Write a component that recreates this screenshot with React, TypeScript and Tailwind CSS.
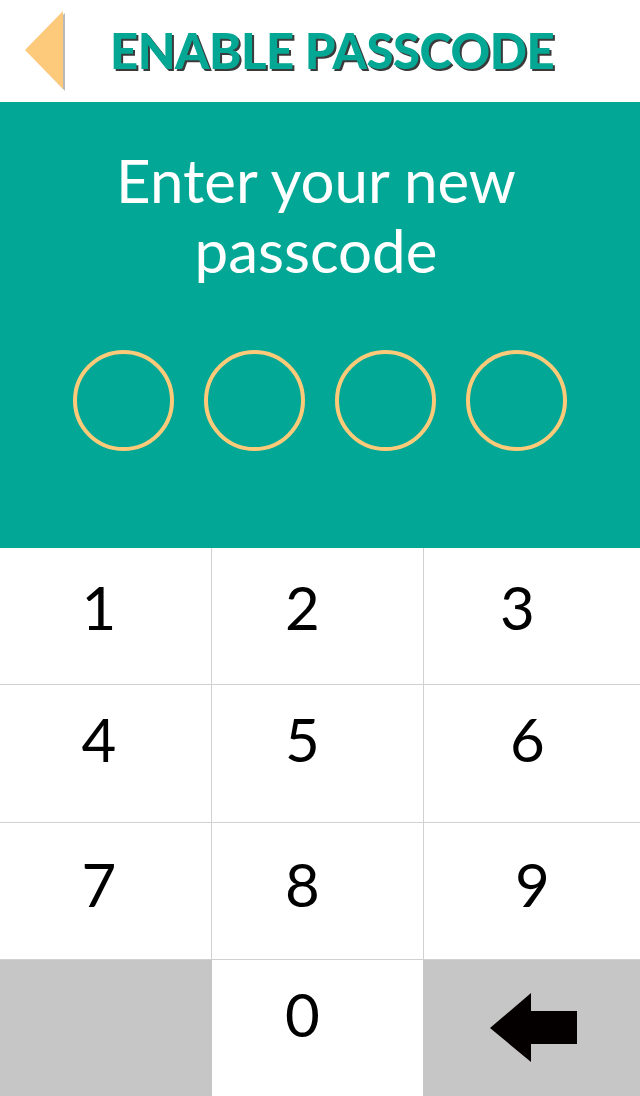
import React from "react";

const font = { fontFamily: "Lato, 'Noto Sans', sans-serif" };

function Key({ label, extra }: { label: string; extra: string }) {
  return (
    <div className={`flex items-center justify-center bg-white text-black text-[60px] leading-none ${extra}`}>
      <span>{label}</span>
    </div>
  );
}

export default function App() {
  return (
    <div className="w-[640px] h-[1096px] bg-white overflow-hidden flex flex-col" style={font}>
      {/* Header */}
      <div className="h-[102px] flex items-center bg-white">
        <svg className="ml-[22px] mt-[2px]" width="46" height="82" viewBox="0 0 46 82">
          <polygon points="5,40 43,2 43,80" fill="#8a8a8a" opacity="0.6" />
          <polygon points="3,39 41,0 41,78" fill="#fdc97b" />
        </svg>
        <h1
          className="ml-[42px] mb-[2px] text-[49px] font-black tracking-[-0.5px] text-[#03a793] leading-none"
          style={{ textShadow: "2px 2px 0 #3a3a3a" }}
        >
          ENABLE PASSCODE
        </h1>
      </div>

      {/* Teal panel */}
      <div className="h-[446px] bg-[#02a895] flex flex-col items-center">
        <div className="mt-[43px] text-white text-[60px] leading-[70px] text-center pr-[8px]">
          Enter your new
          <br />
          passcode
        </div>
        <div className="mt-[65px] flex gap-[30px]">
          <div className="w-[101px] h-[101px] rounded-full border-[4px] border-[#fcca79]" />
          <div className="w-[101px] h-[101px] rounded-full border-[4px] border-[#fcca79]" />
          <div className="w-[101px] h-[101px] rounded-full border-[4px] border-[#fcca79]" />
          <div className="w-[101px] h-[101px] rounded-full border-[4px] border-[#fcca79]" />
        </div>
      </div>

      {/* Keypad */}
      <div className="flex-1 grid grid-cols-[211px_211px_1fr] grid-rows-4 gap-px bg-[#d0d0d0]">
        <Key label="1" extra="pr-[13px] pb-[19px]" />
        <Key label="2" extra="pr-[30px] pb-[19px]" />
        <Key label="3" extra="pr-[29px] pb-[19px]" />
        <Key label="4" extra="pr-[13px] pb-[28px]" />
        <Key label="5" extra="pr-[30px] pb-[28px]" />
        <Key label="6" extra="pr-[9px] pb-[28px]" />
        <Key label="7" extra="pr-[13px] pb-[14px]" />
        <Key label="8" extra="pr-[30px] pb-[14px]" />
        <Key label="9" extra="pl-[1px] pb-[14px]" />
        <div className="bg-[#c6c6c6] -mr-px" />
        <Key label="0" extra="pr-[30px] pb-[28px]" />
        <div className="bg-[#c6c6c6] -ml-px flex items-center justify-center pl-[4px]">
          <svg width="87" height="69" viewBox="0 0 87 69">
            <polygon points="0,35 41,0 41,18 87,18 87,51 41,51 41,69" fill="#050000" />
          </svg>
        </div>
      </div>
    </div>
  );
}
